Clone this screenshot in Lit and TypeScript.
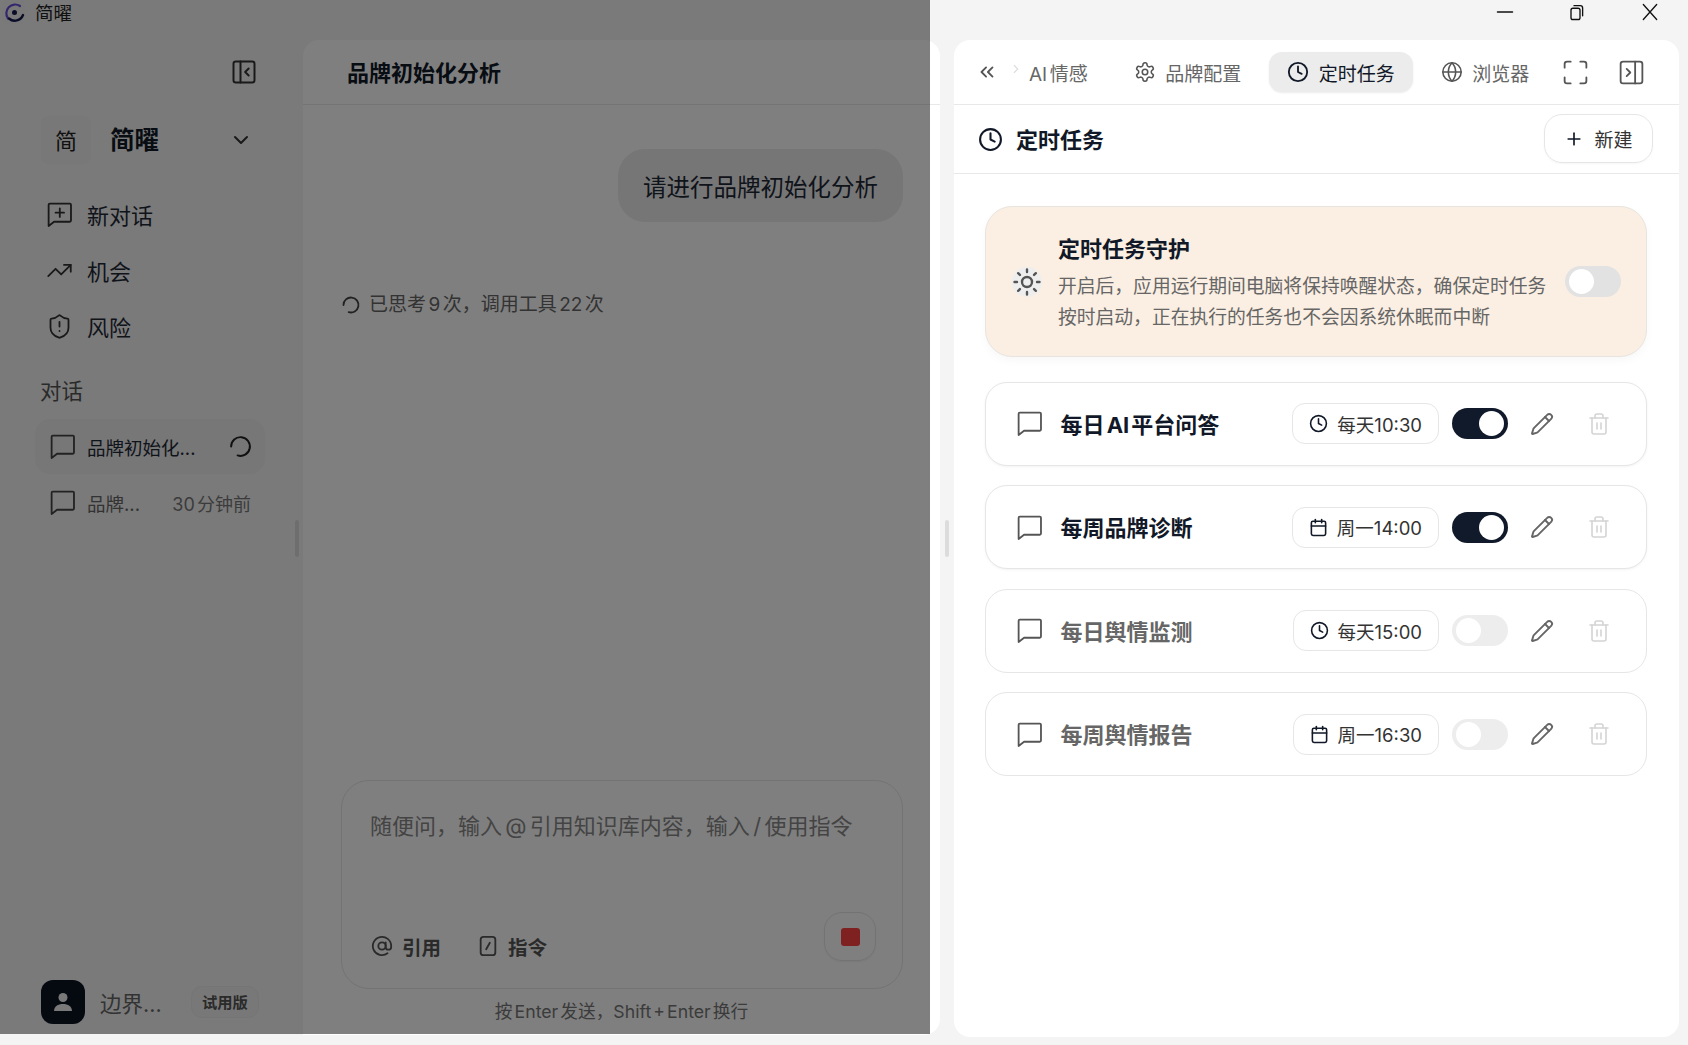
import { LitElement, html, css, svg } from "lit";
import { customElement } from "lit/decorators.js";

const CHAT = "M21.5 4v13a1 1 0 0 1-1 1H7.500L3 21.500V4a1 1 0 0 1 1-1h16.500a1 1 0 0 1 1 1z";
const P: Record<string, any> = {
  chat: svg`<path d=${CHAT}/>`,
  chatPlus: svg`<path d=${CHAT}/><path d="M12.250 7v7M8.750 10.500h7"/>`,
  trend: svg`<path d="M22 7l-8.500 8.500-5-5L2 17"/><path d="M16 7h6v6"/>`,
  shield: svg`<path d="M20 13c0 5-3.500 7.500-7.660 8.950a1 1 0 0 1-.67-.01C7.500 20.500 4 18 4 13V6a1 1 0 0 1 1-1c2 0 4.500-1.200 6.240-2.720a1.170 1.170 0 0 1 1.520 0C14.510 3.810 17 5 19 5a1 1 0 0 1 1 1z"/><path d="M12 8v4"/><path d="M12 16h.01"/>`,
  panelL: svg`<rect x="3" y="3" width="18" height="18" rx="2"/><path d="M9 3v18"/><path d="M16 15l-3-3 3-3"/>`,
  panelR: svg`<rect x="3" y="3" width="18" height="18" rx="2"/><path d="M15 3v18"/><path d="M8 9l3 3-3 3"/>`,
  down: svg`<path d="M6 9l6 6 6-6"/>`,
  dbl: svg`<path d="m11 17-5-5 5-5"/><path d="m18 17-5-5 5-5"/>`,
  right: svg`<path d="m9 18 6-6-6-6"/>`,
  gear: svg`<path d="M12.220 2h-.44a2 2 0 0 0-2 2v.18a2 2 0 0 1-1 1.730l-.43.25a2 2 0 0 1-2 0l-.15-.08a2 2 0 0 0-2.730.73l-.22.38a2 2 0 0 0 .73 2.730l.15.1a2 2 0 0 1 1 1.720v.51a2 2 0 0 1-1 1.740l-.15.09a2 2 0 0 0-.73 2.730l.22.38a2 2 0 0 0 2.730.73l.15-.08a2 2 0 0 1 2 0l.43.25a2 2 0 0 1 1 1.730V20a2 2 0 0 0 2 2h.44a2 2 0 0 0 2-2v-.18a2 2 0 0 1 1-1.730l.43-.25a2 2 0 0 1 2 0l.15.08a2 2 0 0 0 2.730-.73l.22-.39a2 2 0 0 0-.73-2.730l-.15-.08a2 2 0 0 1-1-1.740v-.5a2 2 0 0 1 1-1.740l.15-.09a2 2 0 0 0 .73-2.730l-.22-.38a2 2 0 0 0-2.730-.73l-.15.08a2 2 0 0 1-2 0l-.43-.25a2 2 0 0 1-1-1.730V4a2 2 0 0 0-2-2z"/><circle cx="12" cy="12" r="3"/>`,
  clock: svg`<circle cx="12" cy="12" r="10"/><path d="M12 6v6l4 2"/>`,
  globe: svg`<circle cx="12" cy="12" r="10"/><path d="M12 2a14.500 14.500 0 0 0 0 20 14.500 14.500 0 0 0 0-20"/><path d="M2 12h20"/>`,
  full: svg`<path d="M8 3H5a2 2 0 0 0-2 2v3"/><path d="M21 8V5a2 2 0 0 0-2-2h-3"/><path d="M3 16v3a2 2 0 0 0 2 2h3"/><path d="M16 21h3a2 2 0 0 0 2-2v-3"/>`,
  plus: svg`<path d="M5 12h14"/><path d="M12 5v14"/>`,
  sun: svg`<circle cx="12" cy="12" r="4"/><path d="M12 2v2M12 20v2M4.930 4.930l1.410 1.410M17.660 17.660l1.410 1.410M2 12h2M20 12h2M6.340 17.660l-1.410 1.410M19.070 4.930l-1.410 1.410"/>`,
  cal: svg`<path d="M8 2v4"/><path d="M16 2v4"/><rect x="3" y="4" width="18" height="18" rx="2"/><path d="M3 10h18"/>`,
  pencil: svg`<path d="M21.174 6.812a1 1 0 0 0-3.986-3.987L3.842 16.174a2 2 0 0 0-.5.830l-1.321 4.352a.5.5 0 0 0 .623.622l4.353-1.320a2 2 0 0 0 .83-.497z"/><path d="m15 5 4 4"/>`,
  trash: svg`<path d="M3 6h18"/><path d="M19 6v14c0 1-1 2-2 2H7c-1 0-2-1-2-2V6"/><path d="M8 6V4c0-1 1-2 2-2h4c1 0 2 1 2 2v2"/><path d="M10 11v6"/><path d="M14 11v6"/>`,
  at: svg`<circle cx="12" cy="12" r="4"/><path d="M16 8v5a3 3 0 0 0 6 0v-1a10 10 0 1 0-4 8"/>`,
  slash: svg`<rect x="4" y="2" width="16" height="20" rx="3"/><path d="M10 15.500l4-7"/>`,
  spin: svg`<path d="M21 12a9 9 0 1 1-6.219-8.560" transform="rotate(180 12 12)"/>`,
  restore: svg`<rect x="4" y="7" width="12" height="15" rx="2.500"/><path d="M8 3.500h8.500a3 3 0 0 1 3 3V17"/>`,
  x: svg`<path d="M4 3l16 18M20 3L4 21"/>`,
  minus: svg`<path d="M2 12h20"/>`,
};

const icon = (name: string, cls = "") =>
  html`<svg class="i ${cls}" viewBox="0 0 24 24" fill="none" stroke="currentColor" stroke-linecap="round" stroke-linejoin="round">${P[name]}</svg>`;

const TASKS = [
  { name: "每日 AI 平台问答", ic: "clock", when: "每天 10:30", on: true },
  { name: "每周品牌诊断", ic: "cal", when: "周一 14:00", on: true },
  { name: "每日舆情监测", ic: "clock", when: "每天 15:00", on: false },
  { name: "每周舆情报告", ic: "cal", when: "周一 16:30", on: false },
];

@customElement("app-root")
export class AppRoot extends LitElement {
  static styles = css`
    :host {
      display: block;
      position: relative;
      width: 1688px;
      height: 1045px;
      overflow: hidden;
      background: #f4f4f4;
      color: #111827;
      font-family: "Inter", "Noto Sans CJK SC", sans-serif;
      word-spacing: -0.18em;
    }
    * { box-sizing: border-box; }
    .i { display: block; flex: none; width: 24px; height: 24px; stroke-width: 2; }

    .titlebar { height: 40px; display: flex; align-items: center; }
    .logo { width: 26px; height: 26px; margin-top: -14px; flex: none; }
    .appname { margin-left: 9px; margin-top: -14px; font-size: 18.5px; line-height: 26px; color: #222; }
    .win { margin-left: auto; display: flex; align-items: center; margin-top: -16px; }
    .win .i { stroke-width: 1.6; color: #111; }
    .win .min { width: 18px; height: 18px; margin-right: 54px; stroke-width: 2; }
    .win .res { width: 18px; height: 18px; margin-right: 54px; stroke-width: 1.8; }
    .win .cls { width: 20px; height: 20px; margin-right: 28px; }

    .main { display: flex; height: 997px; }

    .side { width: 303px; flex: none; display: flex; flex-direction: column; position: relative; padding-bottom: 13px; }
    .collapse { display: flex; justify-content: flex-end; padding: 18px 45px 0 0; }
    .collapse .i { width: 28px; height: 28px; color: #333; stroke-width: 1.7; }
    .brand { display: flex; align-items: center; margin: 29px 0 0 41px; height: 50px; width: 218px; }
    .brand .sq { width: 50px; height: 50px; border-radius: 9px; background: #f0f0f0; display: flex; align-items: center; justify-content: center; font-size: 22px; color: #222; padding-bottom: 3px; }
    .brand b { margin-left: 19px; font-size: 24.500px; font-weight: 700; line-height: 52px; }
    .brand .i { margin-left: auto; margin-right: 6px; width: 24px; height: 24px; color: #333; }
    .nav { margin-top: 21px; display: flex; flex-direction: column; }
    .nav a { height: 56px; display: flex; align-items: center; padding-left: 44.500px; font-size: 22px; color: #1f2937; gap: 13.500px; }
    .nav .i { width: 29px; height: 29px; color: #333; stroke-width: 1.500; }
    .nav .i.sm { width: 27px; height: 27px; margin: 0 1px; stroke-width: 1.600; }
    .label { margin: 21px 0 0 40px; font-size: 21.500px; line-height: 32px; color: #555; }
    .conv { margin: 12px 0 0 35px; width: 230px; height: 55px; display: flex; align-items: center; padding: 0 14px 0 12.500px; gap: 10.500px; border-radius: 15px; font-size: 18.500px; white-space: nowrap; }
    .conv > .i:first-child { width: 29px; height: 29px; color: #444; stroke-width: 1.500; }
    .conv.active { background: #eeeeee; color: #1f2937; }
    .conv.idle { margin-top: 1px; color: #666; }
    .conv .t { flex: 1; min-width: 0; }
    .conv .m { color: #777; font-size: 18px; }
    .conv .spin { width: 25px; height: 25px; color: #222; stroke-width: 1.900; margin-right: -2px; }
    .foot { margin-top: auto; display: flex; align-items: center; padding-left: 41px; }
    .avatar { width: 44px; height: 44px; border-radius: 12px; background: #0b1220; display: flex; align-items: center; justify-content: center; }
    .avatar svg { width: 24px; height: 24px; display: block; }
    .foot .n { margin-left: 15px; font-size: 21.500px; color: #666; width: 91px; white-space: nowrap; }
    .badge { height: 32px; padding: 0 10px; border: 1px solid #eaeaea; background: #f0f0f0; border-radius: 11px; font-size: 15.300px; font-weight: 700; line-height: 31px; color: #555; }
    .thumb { position: absolute; width: 4px; height: 37px; border-radius: 2px; background: #dcdcdc; left: 295px; top: 480px; }

    .chat { width: 637px; flex: none; background: #fff; border-radius: 16px 16px 16px 0; display: flex; flex-direction: column; height: 995px; }
    .chat header { height: 65px; flex: none; padding: 0 0 2px 44px; border-bottom: 1.500px solid #e8e8e8; display: flex; align-items: center; font-size: 22px; font-weight: 700; }
    .bubble { align-self: flex-end; margin: 44px 37px 0 0; height: 73px; padding: 0 25px; border-radius: 27px; background: #ededed; display: flex; align-items: center; font-size: 23.500px; color: #1f2937; }
    .status { display: flex; align-items: center; gap: 8px; margin: 65px 0 0 38px; font-size: 19px; color: #666; line-height: 36px; }
    .status .i { width: 20px; height: 20px; color: #444; stroke-width: 2.200; }
    .box { margin: auto 37px 0 38px; height: 209px; flex: none; border: 1.500px solid #e6e6e6; border-radius: 28px; display: flex; flex-direction: column; padding: 28px 26px 27px 28px; }
    .ph { font-size: 22px; line-height: 34px; color: #888; white-space: nowrap; }
    .tools { margin-top: auto; display: flex; align-items: flex-end; padding-left: 1px; }
    .tool { display: flex; align-items: center; gap: 9px; font-size: 19.500px; font-weight: 700; color: #555; margin-right: 36px; height: 32px; margin-bottom: -1px; }
    .tool .i { width: 22px; height: 22px; color: #555; stroke-width: 2; }
    .stop { margin-left: auto; width: 52px; height: 49px; border: 1.500px solid #e6e6e6; border-radius: 18px; display: flex; align-items: center; justify-content: center; box-shadow: 0 1px 2px rgba(0,0,0,.06); }
    .stop span { width: 19px; height: 18px; border-radius: 3px; background: #fe4343; }
    .hint { text-align: center; font-size: 17.700px; line-height: 26px; color: #777; padding: 10px 0 10px; }

    .grip { width: 14px; flex: none; position: relative; }
    .grip i { position: absolute; left: 5px; top: 480px; width: 4px; height: 37px; border-radius: 2px; background: #dcdcdc; }

    .panel { width: 725px; flex: none; background: #fff; border-radius: 16px; height: 997px; display: flex; flex-direction: column; }
    .tabs { height: 65px; flex: none; border-bottom: 1.500px solid #e8e8e8; display: flex; align-items: center; padding-left: 22px; color: #777; }
    .tabs .dbl { width: 22px; height: 22px; color: #555; stroke-width: 2; }
    .tabs .fade { width: 14px; height: 14px; margin: 0 0 6px 11px; color: #ddd; stroke-width: 2; }
    .tab { height: 40px; display: flex; align-items: center; gap: 9.500px; padding: 0 18px; border-radius: 13px; font-size: 19px; white-space: nowrap; color: #666; }
    .tab .i { width: 22px; height: 22px; color: #555; stroke-width: 1.700; }
    .tab.first { padding: 0; margin: 0 28px 0 6px; }
    .tab.act { background: #ececec; color: #111827; margin: 0 10px; box-shadow: 0 1px 2px rgba(0,0,0,.08); }
    .tab.act .i { color: #111827; stroke-width: 2; }
    .tabs .tool2 { width: 29px; height: 29px; color: #555; stroke-width: 1.500; }
    .tabs .a1 { margin-left: 14px; }
    .tabs .a2 { margin-left: 26.500px; }

    .sub { height: 69px; flex: none; border-bottom: 1.500px solid #e8e8e8; display: flex; align-items: center; padding: 0 26px 0 24px; }
    .sub > .i { width: 25px; height: 25px; stroke-width: 2; }
    .sub b { margin-left: 13px; font-size: 22px; font-weight: 700; line-height: 30px; padding-top: 1px; }
    .new { margin-left: auto; width: 109px; height: 49px; margin-top: -1px; border: 1.500px solid #e6e6e6; border-radius: 18px; display: flex; align-items: center; justify-content: center; gap: 10px; font-size: 19px; color: #333; box-shadow: 0 1px 2px rgba(0,0,0,.04); }
    .new .i { width: 20px; height: 20px; color: #111827; }

    .list { padding: 32px 32px 0 31px; display: flex; flex-direction: column; gap: 19.500px; }
    .banner { height: 151px; border: 1.500px solid #e8e4df; border-radius: 27px; background: #fbefe3; display: flex; align-items: center; padding: 0 25px 0 26px; margin-bottom: 5px; box-shadow: 0 4px 10px rgba(0,0,0,.03); }
    .sunw { width: 30px; height: 30px; border-radius: 50%; background: #eeeeee; display: flex; align-items: center; justify-content: center; flex: none; }
    .sunw .i { width: 30px; height: 30px; color: #555; stroke-width: 1.900; }
    .btext { margin: 2px 0 0 16px; width: 496px; }
    .btext h3 { margin: 0 0 5px; font-size: 22px; line-height: 34px; font-weight: 700; }
    .btext p { margin: 0; font-size: 18.800px; line-height: 31px; color: #666; }
    .sw { width: 56px; height: 31px; border-radius: 16px; flex: none; display: flex; align-items: center; padding: 0 4px; background: #ededed; }
    .sw span { width: 25px; height: 25px; border-radius: 50%; background: #fff; }
    .sw.on { background: #111a2b; justify-content: flex-end; }
    .banner .sw { margin-left: auto; background: #e2e2e2; }
    .card { height: 84px; border: 1.500px solid #e6e6e6; border-radius: 22px; display: flex; align-items: center; padding: 0 35px 0 29px; background: #fff; box-shadow: 0 1px 3px rgba(0,0,0,.05); }
    .card.off { box-shadow: none; }
    .card > .i:first-child { width: 29px; height: 29px; color: #555; stroke-width: 1.500; }
    .card .title { margin-left: 16.500px; font-size: 22px; font-weight: 700; white-space: nowrap; padding-bottom: 2px; word-spacing: -0.14em; }
    .card.off .title { color: #666; }
    .chip { margin-left: auto; height: 41px; border: 1.500px solid #e6e6e6; border-radius: 13px; display: flex; align-items: center; gap: 9px; padding: 0 16px; font-size: 18.500px; color: #333; white-space: nowrap; word-spacing: -0.28em; }
    .chip .i { width: 19px; height: 19px; color: #111827; stroke-width: 2; }
    .card .sw { margin-left: 13px; }
    .card .edit { margin-left: 22px; width: 24px; height: 24px; color: #666; stroke-width: 1.900; }
    .card .del { margin-left: 33px; width: 24px; height: 24px; color: #d4d4d4; stroke-width: 1.600; }

    .overlay { position: absolute; left: 0; top: 0; width: 930px; height: 1034px; background: rgba(0, 0, 0, 0.5); }
  `;

  render() {
    return html`
      <div class="titlebar">
        <svg class="logo" viewBox="0 0 26 26" fill="none" stroke-linecap="round">
          <rect x="2" width="23" height="24" rx="5" fill="#f2f2f2"/>
          <path d="M20 6A8.800 8.800 0 0 0 8 18.500" stroke="#6a4fd8" stroke-width="2.200"/>
          <path d="M9 18.500A8.800 8.800 0 0 0 23 15" stroke="#141a4e" stroke-width="2.400"/>
          <circle cx="14.500" cy="12.500" r="2.500" fill="#141a4e"/>
        </svg>
        <span class="appname">简曜</span>
        <div class="win">
          ${icon("minus", "min")}${icon("restore", "res")}${icon("x", "cls")}
        </div>
      </div>
      <div class="main">
        <aside class="side">
          <div class="collapse">${icon("panelL")}</div>
          <div class="brand"><span class="sq">简</span><b>简曜</b>${icon("down")}</div>
          <nav class="nav">
            <a>${icon("chatPlus")}新对话</a>
            <a>${icon("trend", "sm")}机会</a>
            <a>${icon("shield", "sm")}风险</a>
          </nav>
          <div class="label">对话</div>
          <div class="conv active">${icon("chat")}<span class="t">品牌初始化...</span>${icon("spin", "spin")}</div>
          <div class="conv idle">${icon("chat")}<span class="t">品牌...</span><span class="m">30 分钟前</span></div>
          <div class="foot">
            <div class="avatar">
              <svg viewBox="0 0 24 24" fill="#f2f2f2"><circle cx="12" cy="7.500" r="4.500"/><path d="M3 21c0-4.400 4-7 9-7s9 2.600 9 7z"/></svg>
            </div>
            <span class="n">边界...</span>
            <span class="badge">试用版</span>
          </div>
          <div class="thumb"></div>
        </aside>
        <section class="chat">
          <header>品牌初始化分析</header>
          <div class="bubble">请进行品牌初始化分析</div>
          <div class="status">${icon("spin")}已思考 9 次，调用工具 22 次</div>
          <div class="box">
            <div class="ph">随便问，输入 @ 引用知识库内容，输入 / 使用指令</div>
            <div class="tools">
              <div class="tool">${icon("at")}引用</div>
              <div class="tool">${icon("slash")}指令</div>
              <div class="stop"><span></span></div>
            </div>
          </div>
          <div class="hint">按 Enter 发送，Shift + Enter 换行</div>
        </section>
        <div class="grip"><i></i></div>
        <section class="panel">
          <div class="tabs">
            ${icon("dbl", "dbl")}${icon("right", "fade")}
            <div class="tab first">AI 情感</div>
            <div class="tab">${icon("gear")}品牌配置</div>
            <div class="tab act">${icon("clock")}定时任务</div>
            <div class="tab">${icon("globe")}浏览器</div>
            ${icon("full", "tool2 a1")}${icon("panelR", "tool2 a2")}
          </div>
          <div class="sub">
            ${icon("clock")}<b>定时任务</b>
            <div class="new">${icon("plus")}新建</div>
          </div>
          <div class="list">
            <div class="banner">
              <div class="sunw">${icon("sun")}</div>
              <div class="btext">
                <h3>定时任务守护</h3>
                <p>开启后，应用运行期间电脑将保持唤醒状态，确保定时任务按时启动，正在执行的任务也不会因系统休眠而中断</p>
              </div>
              <div class="sw"><span></span></div>
            </div>
            ${TASKS.map(
              (t) => html`
                <div class="card ${t.on ? "" : "off"}">
                  ${icon("chat")}
                  <span class="title">${t.name}</span>
                  <div class="chip">${icon(t.ic)}${t.when}</div>
                  <div class="sw ${t.on ? "on" : ""}"><span></span></div>
                  ${icon("pencil", "edit")}${icon("trash", "del")}
                </div>
              `
            )}
          </div>
        </section>
      </div>
      <div class="overlay"></div>
    `;
  }
}
